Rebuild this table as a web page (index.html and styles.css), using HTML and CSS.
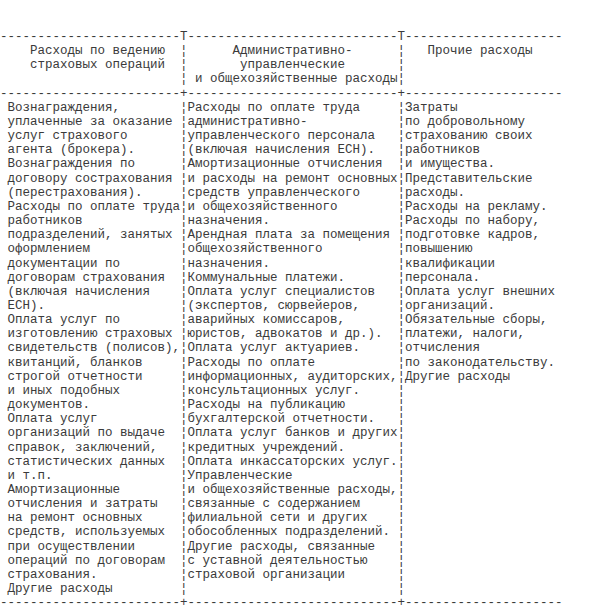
FILE: index.html
```html
<!DOCTYPE html>
<html lang="ru">
<head>
    <meta charset="UTF-8">
    <meta name="viewport" content="width=device-width, initial-scale=1.0">
    <title>Расходы страховой организации</title>
    <link rel="stylesheet" href="styles.css">
</head>
<body>

<pre class="report">
------------------------T----------------------------T---------------------
    Расходы по ведению  ¦      Административно-      ¦   Прочие расходы
    страховых операций  ¦       управленческие       ¦
                        ¦ и общехозяйственные расходы¦
------------------------+----------------------------+---------------------
 Вознаграждения,        ¦Расходы по оплате труда     ¦Затраты
 уплаченные за оказание ¦административно-            ¦по добровольному
 услуг страхового       ¦управленческого персонала   ¦страхованию своих
 агента (брокера).      ¦(включая начисления ЕСН).   ¦работников
 Вознаграждения по      ¦Амортизационные отчисления  ¦и имущества.
 договору сострахования ¦и расходы на ремонт основных¦Представительские
 (перестрахования).     ¦средств управленческого     ¦расходы.
 Расходы по оплате труда¦и общехозяйственного        ¦Расходы на рекламу.
 работников             ¦назначения.                 ¦Расходы по набору,
 подразделений, занятых ¦Арендная плата за помещения ¦подготовке кадров,
 оформлением            ¦общехозяйственного          ¦повышению
 документации по        ¦назначения.                 ¦квалификации
 договорам страхования  ¦Коммунальные платежи.       ¦персонала.
 (включая начисления    ¦Оплата услуг специалистов   ¦Оплата услуг внешних
 ЕСН).                  ¦(экспертов, сюрвейеров,     ¦организаций.
 Оплата услуг по        ¦аварийных комиссаров,       ¦Обязательные сборы,
 изготовлению страховых ¦юристов, адвокатов и др.).  ¦платежи, налоги,
 свидетельств (полисов),¦Оплата услуг актуариев.     ¦отчисления
 квитанций, бланков     ¦Расходы по оплате           ¦по законодательству.
 строгой отчетности     ¦информационных, аудиторских,¦Другие расходы
 и иных подобных        ¦консультационных услуг.     ¦
 документов.            ¦Расходы на публикацию       ¦
 Оплата услуг           ¦бухгалтерской отчетности.   ¦
 организаций по выдаче  ¦Оплата услуг банков и других¦
 справок, заключений,   ¦кредитных учреждений.       ¦
 статистических данных  ¦Оплата инкассаторских услуг.¦
 и т.п.                 ¦Управленческие              ¦
 Амортизационные        ¦и общехозяйственные расходы,¦
 отчисления и затраты   ¦связанные с содержанием     ¦
 на ремонт основных     ¦филиальной сети и других    ¦
 средств, используемых  ¦обособленных подразделений. ¦
 при осуществлении      ¦Другие расходы, связанные   ¦
 операций по договорам  ¦с уставной деятельностью    ¦
 страхования.           ¦страховой организации       ¦
 Другие расходы         ¦                            ¦
------------------------+----------------------------+---------------------
</pre>

</body>
</html>
```

FILE: styles.css
```css
body {
    margin: 0;
    background-color: #fff;
}
.report {
    margin: 30px 0 0 0;
    font-family: "Liberation Mono", "Courier New", monospace;
    font-size: 12.5px;
    line-height: 14.15px;
    color: #3a3a3a;
}
```
